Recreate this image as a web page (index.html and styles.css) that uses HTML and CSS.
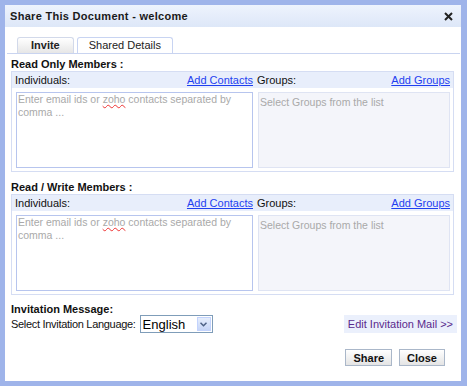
FILE: index.html
```html
<!DOCTYPE html>
<html lang="en">
<head>
  <meta charset="UTF-8">
  <title>Share This Document</title>
  <link rel="stylesheet" href="styles.css">
</head>
<body>
  <div class="dialog">
    <div class="title-bar">
      <span class="title">Share This Document - welcome</span>
      <span class="close-icon">
        <svg width="9" height="9" viewBox="0 0 9 9"><path d="M1 1L8 8M8 1L1 8" stroke="#222" stroke-width="2"/></svg>
      </span>
    </div>

    <div class="tabs">
      <span class="tab active">Invite</span>
      <span class="tab">Shared Details</span>
    </div>

    <div class="content">
      <div class="section-title">Read Only Members :</div>
      <div class="member-box">
        <div class="member-head">
          <div class="head-cell"><span>Individuals:</span><a href="#">Add Contacts</a></div>
          <div class="head-cell"><span>Groups:</span><a href="#">Add Groups</a></div>
        </div>
        <div class="member-body">
          <div class="email-input">Enter email ids or <span class="misspelled">zoho</span> contacts separated by<br>comma ...</div>
          <div class="group-list">Select Groups from the list</div>
        </div>
      </div>

      <div class="section-title second">Read / Write Members :</div>
      <div class="member-box">
        <div class="member-head">
          <div class="head-cell"><span>Individuals:</span><a href="#">Add Contacts</a></div>
          <div class="head-cell"><span>Groups:</span><a href="#">Add Groups</a></div>
        </div>
        <div class="member-body">
          <div class="email-input">Enter email ids or <span class="misspelled">zoho</span> contacts separated by<br>comma ...</div>
          <div class="group-list">Select Groups from the list</div>
        </div>
      </div>

      <div class="section-title invite">Invitation Message:</div>
      <div class="invite-row">
        <label for="lang" class="lang-label">Select Invitation Language:</label>
        <div class="lang-select">
          <select id="lang"><option>English</option></select>
          <span class="select-arrow">
            <svg width="7" height="5" viewBox="0 0 7 5"><path d="M0.5 0.8L3.5 3.8L6.5 0.8" fill="none" stroke="#4d6185" stroke-width="1.5"/></svg>
          </span>
        </div>
        <a href="#" class="edit-mail">Edit Invitation Mail &gt;&gt;</a>
      </div>

      <div class="actions">
        <button>Share</button>
        <button>Close</button>
      </div>
    </div>
  </div>
</body>
</html>
```

FILE: styles.css
```css
body {
  margin: 0;
  padding: 5px 6px 5px 5px;
  background: #9fb4ea;
  font-family: "Liberation Sans", Arial, sans-serif;
  font-size: 11px;
  color: #111;
}
.dialog {
  height: 376px;
  background: #fff;
}
.title-bar {
  height: 22px;
  display: flex;
  align-items: center;
  justify-content: space-between;
  padding: 0 8px 0 5px;
  background: linear-gradient(#eef3fd, #dde7f8);
}
.title {
  font-weight: bold;
  font-size: 11px;
  letter-spacing: 0.3px;
  color: #1a1a1a;
}
.close-icon {
  display: flex;
}
.tabs {
  display: flex;
  gap: 3px;
  margin: 10px 1px 0 2px;
  padding-left: 10px;
  border-bottom: 1px solid #c9d4f0;
}
.tab {
  height: 15px;
  line-height: 15px;
  padding: 0 11px;
  border: 1px solid #c8d4f2;
  border-bottom: none;
  border-radius: 3px 3px 0 0;
  background: #fff;
  color: #222;
}
.tab.active {
  padding: 0 13px;
  font-weight: bold;
  background: linear-gradient(#fff, #e6e6e6);
  border-color: #d2d9ea;
}
.content {
  padding: 0 7px 0 6px;
}
.section-title {
  margin-top: 3px;
  line-height: 14px;
  font-weight: bold;
  color: #111;
}
.section-title.second {
  margin-top: 8px;
}
.section-title.invite {
  margin-top: 9px;
  line-height: 11px;
}
.member-box {
  border: 1px solid #d5ddf3;
  padding-bottom: 3px;
}
.member-head,
.member-body {
  display: grid;
  grid-template-columns: 237px 1fr;
  gap: 5px;
  padding: 0 3px 0 4px;
}
.member-head {
  height: 16px;
  align-items: center;
  background: #e8eefb;
  margin-bottom: 4px;
}
.head-cell {
  display: flex;
  justify-content: space-between;
}
.head-cell span:first-child {
  margin-left: -1px;
}
.head-cell a {
  color: #1f3ff0;
}
.email-input,
.group-list {
  height: 76px;
  box-sizing: border-box;
  padding: 0 1px;
  line-height: 13px;
  font-size: 10.5px;
  color: #a9a9a9;
}
.email-input {
  border: 1px solid #b7c5ee;
  background: #fff;
}
.misspelled {
  text-decoration: underline wavy #e33;
  text-decoration-thickness: 1px;
}
.group-list {
  border: 1px solid #dfe4f3;
  background: #f4f5fa;
  padding-top: 3px;
}
.invite-row {
  display: flex;
  align-items: center;
  height: 18px;
}
.lang-label {
  letter-spacing: -0.3px;
}
.lang-select {
  display: flex;
  align-items: center;
  width: 71px;
  height: 16px;
  margin-left: 4px;
  border: 1px solid #7f9db9;
  background: #fff;
}
.lang-select select {
  flex: 1;
  min-width: 0;
  height: 16px;
  padding: 0 0 0 2px;
  border: none;
  background: #fff;
  appearance: none;
  font-family: "Liberation Sans", Arial, sans-serif;
  font-size: 13px;
  color: #000;
}
.select-arrow {
  display: flex;
  align-items: center;
  justify-content: center;
  width: 14px;
  height: 14px;
  margin-right: 1px;
  border: 1px solid #c3d3fd;
  background: linear-gradient(#e6eefc, #c6d5f7);
  box-sizing: border-box;
}
.edit-mail {
  margin: 0 -3px 0 auto;
  height: 18px;
  line-height: 18px;
  padding: 0 4px;
  background: #ebf0fc;
  color: #5a2a8c;
  text-decoration: none;
}
.actions {
  display: flex;
  justify-content: flex-end;
  gap: 7px;
  margin: 16px 9px 0 0;
}
.actions button {
  height: 17px;
  padding: 0 7px;
  border: 1px solid #aab7c9;
  background: linear-gradient(#fff, #e4e4e4);
  font-family: "Liberation Sans", Arial, sans-serif;
  font-size: 11px;
  font-weight: bold;
  color: #111;
  cursor: pointer;
}
```
